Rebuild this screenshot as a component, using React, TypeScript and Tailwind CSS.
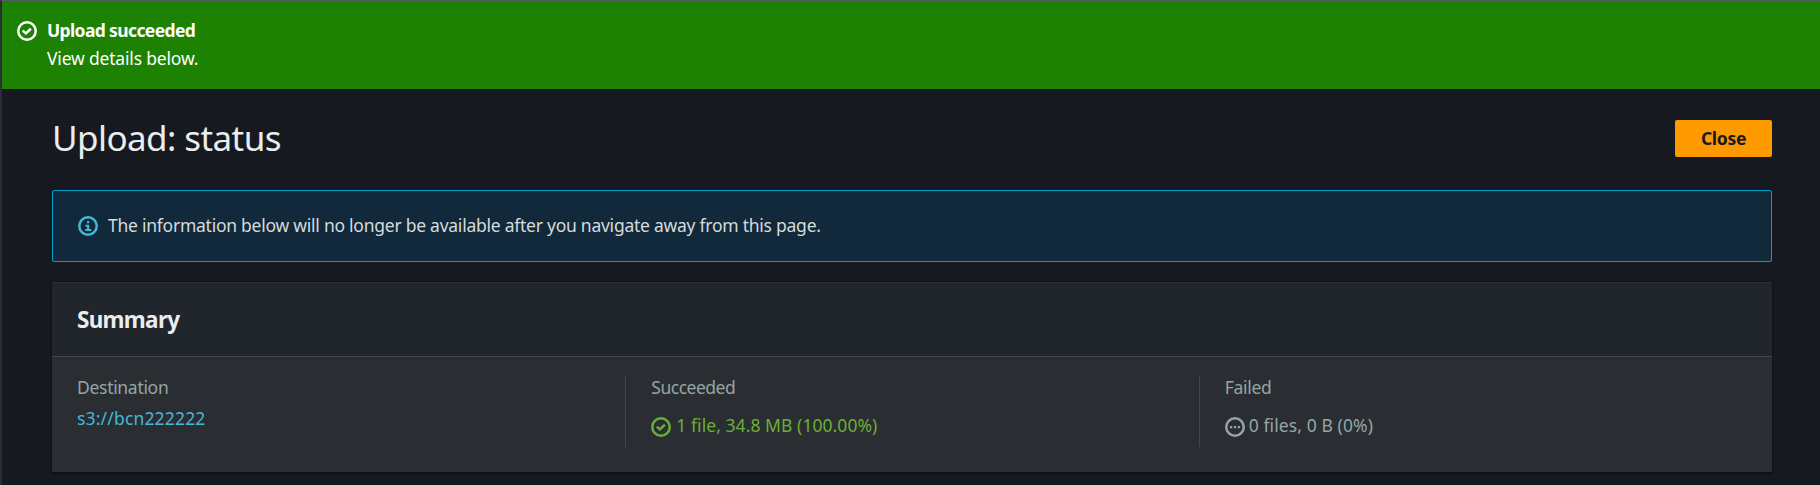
import React from "react";

type IconProps = { kind: "success" | "info" | "pending"; className?: string };

function StatusIcon({ kind, className = "" }: IconProps) {
  return (
    <svg viewBox="0 0 16 16" fill="none" stroke="currentColor" strokeWidth="2" className={"size-5 shrink-0 " + className}>
      <circle cx="8" cy="8" r="7" />
      {kind === "success" && <path d="m4.6 7.7 2.5 2.2 4-3.7" />}
      {kind === "info" && <path d="M8.1 11.2V7.8H6M10.6 11.2H5.8M8.1 5.7V4" strokeWidth="1.7" />}
      {kind === "pending" && <path d="M4 8h1.8M7.1 8h1.8M10.2 8H12" strokeWidth="1.8" />}
    </svg>
  );
}

type FieldProps = { label: React.ReactNode; children: React.ReactNode; divided?: boolean };

function Field({ label, children, divided }: FieldProps) {
  return (
    <div className={"h-[71px] border-l " + (divided ? "border-[#414750] pl-[25px]" : "border-transparent pl-6")}>
      <div className="h-[25px] leading-[23px] text-[#95a5a6]">{label}</div>
      {children}
    </div>
  );
}

export default function App() {
  return (
    <div className="h-[485px] overflow-hidden whitespace-nowrap border-t border-l-2 border-t-[#545b64] border-l-[#2a2e33] bg-[#16191f] font-['Noto_Sans',sans-serif] text-[17.5px] text-[#d5dbdb]">
      <div className="flex h-[88px] gap-[10px] bg-[#1d8102] pt-[15px] pl-[15px] text-white">
        <StatusIcon kind="success" className="mt-[5px]" />
        <div className="leading-[28px]">
          <div className="font-bold tracking-[-0.63px]">Upload succeeded</div>
          <div className="tracking-[-0.18px]">View details below.</div>
        </div>
      </div>
      <main className="pr-12 pl-[50px]">
        <div className="flex h-[101px] items-start justify-between pt-[31px]">
          <h1 className="mt-[-6px] text-[35px] leading-[48px] tracking-[-0.58px] text-[#eaeded]">Upload: status</h1>
          <button className="h-[37px] w-[97px] rounded-[2px] bg-[#ff9900] font-bold tracking-[-0.3px] text-[#16191f]">Close</button>
        </div>
        <div className="flex h-[72px] items-center gap-[10px] rounded-[2px] border border-[#00a1c9] bg-[#12293b] pl-[25px]">
          <StatusIcon kind="info" className="text-[#44b9d6]" />
          <span className="pb-px tracking-[-0.25px]">The information below will no longer be available after you navigate away from this page.</span>
        </div>
        <section className="mt-5 h-[190px] border-t border-[#2a2e33] bg-[#2a2e33] shadow-[0_1px_2px_1px_rgba(0,0,0,0.35)]">
          <header className="flex h-[74px] items-center border-b border-[#414750] bg-[#21252c] pl-[25px]">
            <h2 className="text-[22.5px] font-bold tracking-[-0.7px] text-[#eaeded]">Summary</h2>
          </header>
          <div className="grid grid-cols-3 pt-[19px]">
            <Field label={<span className="tracking-[-0.3px]">Destination</span>}>
              <a className="block leading-[35px] tracking-[0.17px] text-[#44b9d6]">s3://bcn222222</a>
            </Field>
            <Field label={<span className="tracking-[-0.5px]">Succeeded</span>} divided>
              <div className="mt-[14px] flex h-6 items-center gap-[5px] text-[#6aaf35]">
                <StatusIcon kind="success" />
                <span className="pb-[3px] tracking-[0.06px]">1 file, 34.8 MB (100.00%)</span>
              </div>
            </Field>
            <Field label={<span className="tracking-[-0.3px]">Failed</span>} divided>
              <div className="mt-[14px] flex h-6 items-center gap-1 text-[#95a5a6]">
                <StatusIcon kind="pending" />
                <span className="pb-[3px] tracking-[0.1px]">0 files, 0 B (0%)</span>
              </div>
            </Field>
          </div>
        </section>
      </main>
    </div>
  );
}
